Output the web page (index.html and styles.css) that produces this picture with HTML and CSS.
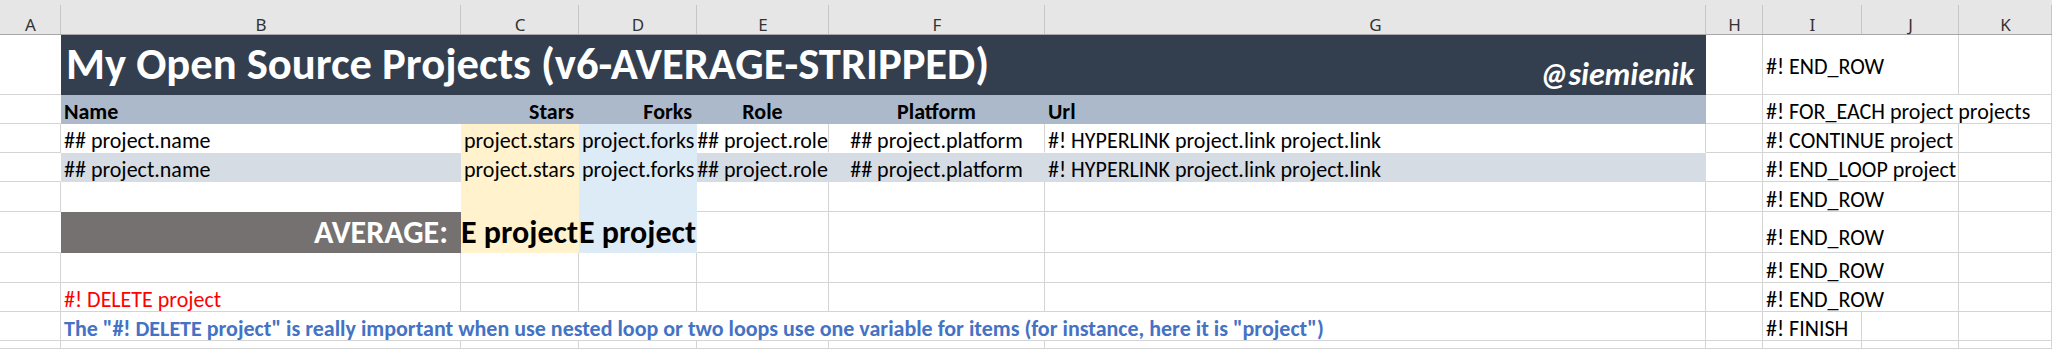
FILE: index.html
```html
<!DOCTYPE html>
<html>
<head>
<meta charset="utf-8">
<link rel="stylesheet" href="styles.css">
</head>
<body>
<div class="sheet">
  <!-- column headers -->
  <div class="ch">A</div><div class="ch">B</div><div class="ch">C</div><div class="ch">D</div><div class="ch">E</div><div class="ch">F</div><div class="ch">G</div><div class="ch">H</div><div class="ch">I</div><div class="ch">J</div><div class="ch">K</div>

  <!-- row 1: title -->
  <div class="c nr"></div>
  <div class="c title span6"><span class="title-text">My Open Source Projects (v6-AVERAGE-STRIPPED)</span><span class="handle">@siemienik</span></div>
  <div class="c"></div>
  <div class="c mid span2">#! END_ROW</div>
  <div class="c"></div>

  <!-- row 2: header -->
  <div class="c nr"></div>
  <div class="c hdr">Name</div>
  <div class="c hdr right">Stars</div>
  <div class="c hdr right">Forks</div>
  <div class="c hdr center">Role</div>
  <div class="c hdr center">Platform</div>
  <div class="c hdr">Url</div>
  <div class="c"></div>
  <div class="c span3">#! FOR_EACH project projects</div>

  <!-- row 3 -->
  <div class="c"></div>
  <div class="c nr nb">## project.name</div>
  <div class="c gold">project.stars</div>
  <div class="c ice">project.forks</div>
  <div class="c nb center">## project.role</div>
  <div class="c nb center">## project.platform</div>
  <div class="c nb">#! HYPERLINK project.link project.link</div>
  <div class="c"></div>
  <div class="c span2">#! CONTINUE project</div>
  <div class="c"></div>

  <!-- row 4 -->
  <div class="c nr"></div>
  <div class="c stripe">## project.name</div>
  <div class="c gold">project.stars</div>
  <div class="c ice">project.forks</div>
  <div class="c stripe center">## project.role</div>
  <div class="c stripe center">## project.platform</div>
  <div class="c stripe">#! HYPERLINK project.link project.link</div>
  <div class="c"></div>
  <div class="c span2">#! END_LOOP project</div>
  <div class="c"></div>

  <!-- row 5 -->
  <div class="c"></div>
  <div class="c nr nb"></div>
  <div class="c gold"></div>
  <div class="c ice"></div>
  <div class="c"></div>
  <div class="c"></div>
  <div class="c"></div>
  <div class="c"></div>
  <div class="c span2">#! END_ROW</div>
  <div class="c"></div>

  <!-- row 6: average -->
  <div class="c nr"></div>
  <div class="c avg">AVERAGE:</div>
  <div class="c gold big">E project</div>
  <div class="c ice big">E project</div>
  <div class="c"></div>
  <div class="c"></div>
  <div class="c"></div>
  <div class="c"></div>
  <div class="c tall span2">#! END_ROW</div>
  <div class="c"></div>

  <!-- row 7 -->
  <div class="c"></div>
  <div class="c"></div>
  <div class="c"></div>
  <div class="c"></div>
  <div class="c"></div>
  <div class="c"></div>
  <div class="c"></div>
  <div class="c"></div>
  <div class="c span2">#! END_ROW</div>
  <div class="c"></div>

  <!-- row 8 -->
  <div class="c"></div>
  <div class="c red">#! DELETE project</div>
  <div class="c"></div>
  <div class="c"></div>
  <div class="c"></div>
  <div class="c"></div>
  <div class="c"></div>
  <div class="c"></div>
  <div class="c span2">#! END_ROW</div>
  <div class="c"></div>

  <!-- row 9 -->
  <div class="c"></div>
  <div class="c note span6">The "#! DELETE project" is really important when use nested loop or two loops use one variable for items (for instance, here it is "project")</div>
  <div class="c"></div>
  <div class="c">#! FINISH</div>
  <div class="c"></div>
  <div class="c"></div>

  <!-- row 10 -->
  <div class="c"></div><div class="c"></div><div class="c"></div><div class="c"></div><div class="c"></div><div class="c"></div><div class="c"></div><div class="c"></div><div class="c"></div><div class="c"></div><div class="c"></div>
</div>
</body>
</html>
```

FILE: styles.css
```css
* { box-sizing: border-box; }
html, body { margin: 0; padding: 0; background: #ffffff; overflow: hidden; }

.sheet {
  display: grid;
  grid-template-columns: 61px 400px 118px 118px 132px 216px 661px 57px 99px 97px 93px;
  grid-template-rows: 35px 60px 29px 29px 29px 30px 41px 30px 29px 29px 8px;
  width: 2052px;
  height: 349px;
  font-family: Carlito, Calibri, "Open Sans", sans-serif;
  font-size: 22px;
  color: #000;
}

.ch {
  background: linear-gradient(#c6c6c6, #c6c6c6) right 5px / 1px calc(100% - 5px) no-repeat, #e6e6e6;
  border-bottom: 1px solid #a8a8a8;
  display: flex;
  align-items: flex-end;
  justify-content: center;
  font-family: "Noto Sans", "Open Sans", sans-serif;
  font-size: 17px;
  line-height: 17px;
  color: #333;
  padding-bottom: 1px;
}

.c {
  border-right: 1px solid #d4d4d4;
  border-bottom: 1px solid #d4d4d4;
  display: flex;
  align-items: flex-end;
  padding: 0 3px;
  white-space: nowrap;
  line-height: 1;
  min-width: 0;
}

.nr { border-right-color: transparent; }
.nb { border-bottom-color: transparent; }

.span2 { grid-column: span 2; }
.span3 { grid-column: span 3; }
.span6 { grid-column: span 6; }

.mid { align-items: center; padding-top: 4px; }
.tall { line-height: 1.22; }
.center { justify-content: center; }
.right { justify-content: flex-end; padding-right: 4px; }

.title {
  background: #333f4f;
  border-color: transparent;
  color: #ffffff;
  font-weight: bold;
  justify-content: space-between;
  align-items: center;
  padding: 0 11px 0 5px;
}
.title-text { font-size: 44.6px; line-height: 1.2; }
.handle {
  align-self: flex-end;
  font-size: 32px;
  font-style: italic;
  line-height: 1.2;
}

.hdr {
  background: #acb9ca;
  border-color: transparent;
  font-weight: bold;
}

.stripe { background: #d6dce4; border-color: transparent; }
.gold { background: #fff2cc; border-color: transparent; }
.ice { background: #ddebf7; border-color: transparent; }

.avg {
  background: #767171;
  border-color: transparent;
  color: #ffffff;
  font-weight: bold;
  font-size: 32px;
  line-height: 1.22;
  justify-content: flex-end;
  padding-right: 12px;
}
.big { font-size: 32px; line-height: 1.22; font-weight: bold; padding-left: 0; overflow: hidden; }

.red { color: #ff0000; }
.note { color: #4472c4; font-weight: bold; }
```
